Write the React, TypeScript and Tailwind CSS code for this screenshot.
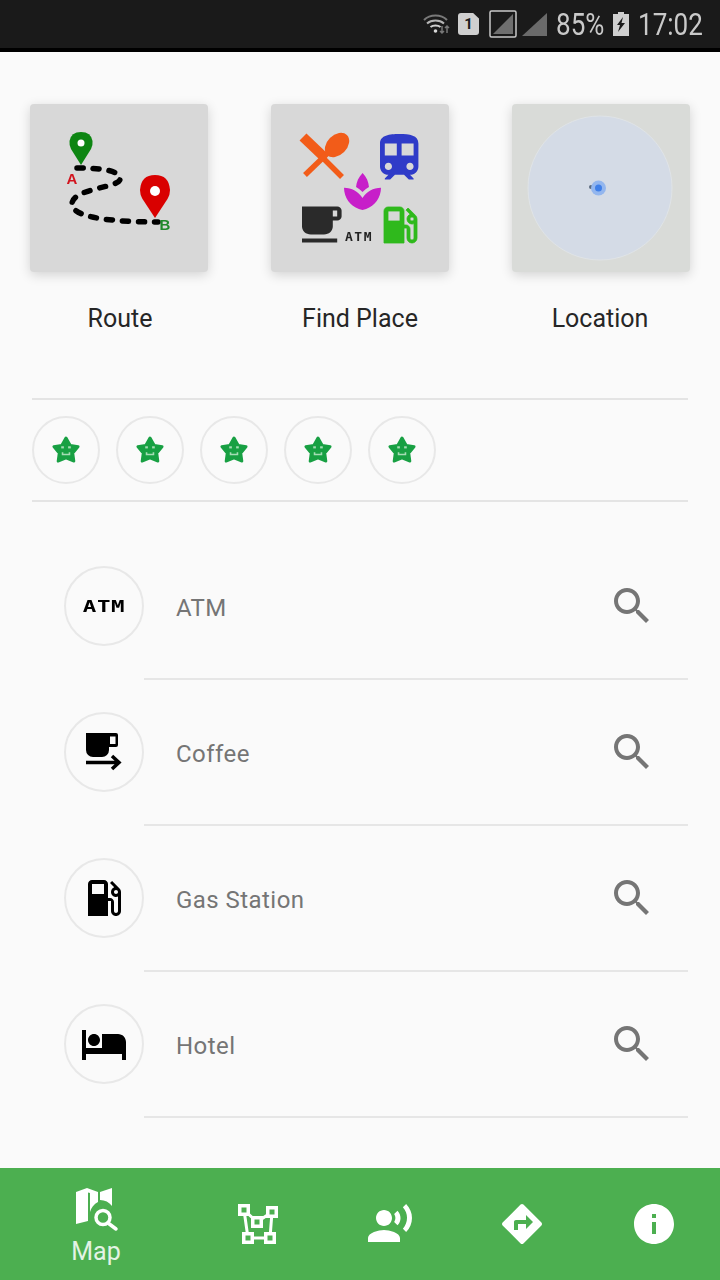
import type { ReactNode } from "react";

const font = "font-['Roboto',sans-serif]";

const paths = {
  search:
    "M15.5 14h-.79l-.28-.27C15.41 12.59 16 11.11 16 9.5 16 5.91 13.09 3 9.5 3S3 5.91 3 9.5 5.91 16 9.5 16c1.61 0 3.09-.59 4.23-1.57l.27.28v.79l5 4.99L20.49 19l-4.99-5zm-6 0C7.01 14 5 11.99 5 9.5S7.01 5 9.5 5 14 7.01 14 9.5 11.99 14 9.5 14z",
  hotel:
    "M7 13c1.66 0 3-1.34 3-3S8.66 7 7 7s-3 1.34-3 3 1.34 3 3 3zm12-6h-8v7H3V5H1v15h2v-3h18v3h2v-9c0-2.21-1.79-4-4-4z",
  gas: "M19.77 7.23l.01-.01-3.72-3.72L15 4.56l2.11 2.11c-.94.36-1.61 1.26-1.61 2.33 0 1.38 1.12 2.5 2.5 2.5.36 0 .69-.08 1-.21v7.21c0 .55-.45 1-1 1s-1-.45-1-1V14c0-1.1-.9-2-2-2h-1V5c0-1.1-.9-2-2-2H6c-1.1 0-2 .9-2 2v16h10v-7.5h1.5v5c0 1.38 1.12 2.5 2.5 2.5s2.5-1.12 2.5-2.5V9c0-.69-.28-1.32-.73-1.77zM12 10H6V5h6v5zm6 0c-.55 0-1-.45-1-1s.45-1 1-1 1 .45 1 1-.45 1-1 1z",
  cafe: "M20 3H4v10c0 2.21 1.79 4 4 4h6c2.21 0 4-1.79 4-4v-3h2c1.11 0 2-.89 2-2V5c0-1.11-.89-2-2-2zm0 5h-2V5h2v3zM4 19h16v2H4z",
  train:
    "M12 2c-4 0-8 .5-8 4v9.5C4 17.43 5.57 19 7.5 19L6 20.5v.5h2.23l2-2H14l2 2h2v-.5L16.5 19c1.93 0 3.5-1.57 3.5-3.5V6c0-3.5-3.58-4-8-4zM7.5 17c-.83 0-1.5-.67-1.5-1.5S6.67 14 7.5 14s1.5.67 1.5 1.5S8.33 17 7.5 17zm3.5-6H6V6h5v5zm2 0V6h5v5h-5zm3.5 6c-.83 0-1.5-.67-1.5-1.5s.67-1.5 1.5-1.5 1.5.67 1.5 1.5-.67 1.5-1.5 1.5z",
  spa: "M15.49 9.63c-.18-2.79-1.31-5.51-3.43-7.63-2.14 2.14-3.32 4.86-3.55 7.63 1.28.68 2.46 1.56 3.49 2.63 1.03-1.06 2.21-1.94 3.49-2.63zM12 15.45C9.85 12.17 6.18 10 2 10c0 5.32 3.36 9.82 8.03 11.49.63.23 1.29.4 1.97.51.68-.12 1.33-.29 1.97-.51C18.64 19.82 22 15.32 22 10c-4.18 0-7.85 2.17-10 5.45z",
  voice:
    "M9 13c2.21 0 4-1.79 4-4s-1.79-4-4-4-4 1.79-4 4 1.79 4 4 4zm0 2c-2.67 0-8 1.34-8 4v2h16v-2c0-2.66-5.33-4-8-4zm6.76-9.64l-1.68 1.69c.84 1.18.84 2.71 0 3.89l1.68 1.69c2.02-2.02 2.02-5.07 0-7.27zM20.07 2l-1.63 1.63c2.77 3.02 2.77 7.56 0 10.74L20.07 16c3.9-3.89 3.91-9.95 0-14z",
  directions:
    "M21.71 11.29l-9-9c-.39-.39-1.02-.39-1.41 0l-9 9c-.39.39-.39 1.02 0 1.41l9 9c.39.39 1.02.39 1.41 0l9-9c.39-.38.39-1.01 0-1.41zM14 14.5V12h-4v3H8v-4c0-.55.45-1 1-1h5V7.5l3.5 3.5-3.5 3.5z",
  info: "M12 2C6.48 2 2 6.48 2 12s4.48 10 10 10 10-4.48 10-10S17.52 2 12 2zm1 15h-2v-6h2v6zm0-8h-2V7h2v2z",
};

function Md({ d, className }: { d: string; className?: string }) {
  return (
    <svg viewBox="0 0 24 24" fill="currentColor" className={className}>
      <path d={d} />
    </svg>
  );
}

function StatusBar() {
  return (
    <div className={`h-[52px] shrink-0 bg-[#1a1a1a] border-b-4 border-black flex items-center text-[#c9c9c9] ${font}`}>
      <div className="ml-[422px] flex items-center">
        <svg width="28" height="22" viewBox="0 0 28 22" fill="none" stroke="#9a9a9a" strokeWidth="2">
          <path d="M2 7c6-6 17-6 23 0" opacity="0.75" />
          <path d="M5 10.5c4.500-4 12.500-4 17 0" stroke="#b5b5b5" />
          <path d="M8.500 14c2.500-2 7.500-2 10 0" stroke="#cfcfcf" />
          <circle cx="13.500" cy="18" r="1.800" fill="#d8d8d8" stroke="none" />
          <path d="M20 13v7M18 18l2 2 2-2M25 20v-7M23 15l2-2 2 2" stroke="#777" strokeWidth="1.500" />
        </svg>
        <div className="ml-[8px] w-[21px] h-[22px] bg-[#cfcfcf] rounded-[3px] [clip-path:polygon(0_0,72%_0,100%_25%,100%_100%,0_100%)] flex items-center justify-center text-[#1a1a1a] text-[15px] font-bold leading-none">
          1
        </div>
        <svg width="28" height="28" viewBox="0 0 28 28" className="ml-[10px]">
          <rect x="1" y="1" width="26" height="26" rx="1.500" fill="none" stroke="#c9c9c9" strokeWidth="1.500" />
          <path d="M4 24L24 4v20z" fill="#6f6f6f" />
        </svg>
        <svg width="25" height="23" viewBox="0 0 25 23" className="ml-[5px]">
          <path d="M0 23L25 0v23z" fill="#6a6a6a" />
        </svg>
        <span className="ml-[9px] w-[47px] text-[31px] leading-none whitespace-nowrap origin-left scale-x-[0.84]">85%</span>
        <svg width="16" height="24" viewBox="0 0 16 24" className="ml-[10px]">
          <path d="M5 0h6v2h5v22H0V2h5z" fill="#cfcfcf" />
          <path d="M10 5L4 13h3l-2 7 7-9H8.500z" fill="#1a1a1a" />
        </svg>
        <span className="ml-[9px] w-[65px] text-[31px] leading-none whitespace-nowrap origin-left scale-x-[0.84]">17:02</span>
      </div>
    </div>
  );
}

function RouteArt() {
  return (
    <svg viewBox="0 0 178 168" className="w-full h-full blur-[0.5px]">
      <path
        d="M47 64C70 64 90 66 90 75C90 84 42 84 42 100C42 115 90 118 128 118"
        fill="none"
        stroke="#000"
        strokeWidth="5.500"
        strokeLinecap="round"
        strokeDasharray="6 10"
      />
      <path d="M51 61L41 45Q39 41 39.500 37Q41 28 51 28Q61 28 62.500 37Q63 41 61 45z" fill="#0d8512" />
      <circle cx="51" cy="39" r="3.500" fill="#fff" />
      <path d="M125 114L112.500 95Q110 91 110 86Q111 71 125 71Q139 71 140 86Q140 91 137.500 95z" fill="#d90000" />
      <circle cx="125" cy="87" r="5" fill="#fff" />
      <text x="42" y="80" textAnchor="middle" fontFamily="Liberation Sans" fontWeight="700" fontSize="15" fill="#d2141e">
        A
      </text>
      <text x="135" y="126" textAnchor="middle" fontFamily="Liberation Sans" fontWeight="700" fontSize="15" fill="#1f8a2a">
        B
      </text>
    </svg>
  );
}

function PlaceArt() {
  return (
    <svg viewBox="0 0 178 168" className="w-full h-full blur-[0.4px]">
      <path d="M32 34L71 73" stroke="#f25c19" strokeWidth="5.500" />
      <path d="M32 33L53 53" stroke="#f25c19" strokeWidth="10" />
      <path d="M34 71L62 44" stroke="#f25c19" strokeWidth="5.500" />
      <ellipse cx="66" cy="41" rx="10" ry="14" transform="rotate(45 66 41)" fill="#f25c19" />
      <path d={paths.train} transform="translate(99.400 25.200) scale(2.400)" fill="#2f3bc8" />
      <path d={paths.spa} transform="translate(69.300 65.300) scale(1.850)" fill="#c71fc9" />
      <path d={paths.cafe} transform="translate(22.200 96.600) scale(2.200 2)" fill="#2a2a2a" />
      <text x="88" y="137" textAnchor="middle" fontFamily="DejaVu Sans Mono" fontWeight="700" fontSize="13" fill="#222" letterSpacing="1.500">
        ATM
      </text>
      <path d={paths.gas} transform="translate(105 97) scale(2)" fill="#2fb91c" stroke="#2fb91c" strokeWidth="0.400" />
    </svg>
  );
}

function LocationArt() {
  return (
    <svg viewBox="0 0 178 168" className="w-full h-full blur-[0.4px]">
      <circle cx="88" cy="84" r="72" fill="#d4dbe6" stroke="#dfe3e6" strokeWidth="1" />
      <circle cx="79" cy="83" r="2" fill="#5b6b80" />
      <circle cx="86.500" cy="84" r="7.500" fill="#93b6ee" />
      <circle cx="86.500" cy="84" r="3.500" fill="#3f7fe8" />
    </svg>
  );
}

function Shortcut({ label, card, children }: { label: string; card: string; children: ReactNode }) {
  return (
    <div className="flex flex-col items-center">
      <div className={`w-[178px] h-[168px] rounded-[4px] overflow-hidden shadow-[0_3px_12px_rgba(0,0,0,0.16)] ${card}`}>{children}</div>
      <div className="mt-[31px] text-[25px] leading-[32px] text-[#262626]">{label}</div>
    </div>
  );
}

function StarFace() {
  return (
    <svg viewBox="0 0 32 32" className="w-[34px] h-[34px]">
      <path
        d="M16 4.500L20 11.500L27.500 12.800L22.500 19L23.500 26.500L16 23.500L8.500 26.500L9.500 19L4.500 12.800L12 11.500z"
        fill="#18a043"
        stroke="#18a043"
        strokeWidth="2.500"
        strokeLinejoin="round"
      />
      <rect x="11.500" y="12.500" width="2.500" height="2" fill="#a5dcb4" />
      <rect x="18" y="12.500" width="2.500" height="2" fill="#a5dcb4" />
      <path d="M12 18h1.500v1.500h5V18H20v3h-8z" fill="#a5dcb4" />
    </svg>
  );
}

const places = [
  {
    name: "ATM",
    icon: (
      <span className="font-['DejaVu_Sans_Mono',monospace] font-bold text-[18px] leading-none tracking-[0.5px] text-black scale-x-[1.25] scale-y-[0.92]">
        ATM
      </span>
    ),
  },
  {
    name: "Coffee",
    icon: (
      <svg viewBox="0 0 38 40" className="w-[38px] h-[40px]">
        <path d="M1 1h30a2 2 0 0 1 2 2v10a2 2 0 0 1-2 2h-7v3a7 7 0 0 1-7 7H8a7 7 0 0 1-7-7z" fill="#000" />
        <rect x="25" y="4.500" width="5.500" height="7.500" fill="#fafafa" />
        <path d="M1 30.500h33M27 24l7 6.500-7 6.500" fill="none" stroke="#000" strokeWidth="3.500" />
      </svg>
    ),
  },
  { name: "Gas Station", icon: <Md d={paths.gas} className="w-[48px] h-[48px] text-black" /> },
  { name: "Hotel", icon: <Md d={paths.hotel} className="w-[48px] h-[48px] text-black" /> },
];

function PlaceRow({ name, icon }: { name: string; icon: ReactNode }) {
  return (
    <div className="relative h-[146px] pl-[64px] flex items-center after:absolute after:left-[144px] after:right-[32px] after:bottom-0 after:h-[2px] after:bg-[#e6e6e6] pb-[2px]">
      <div className="w-[80px] h-[80px] rounded-full border-2 border-[#e8e8e8] flex items-center justify-center">{icon}</div>
      <div className="ml-[32px] flex-1 text-[24px] leading-[32px] text-[#757575] tracking-[0.45px] mt-[3px]">{name}</div>
      <Md d={paths.search} className="w-[48px] h-[48px] text-[#757575] mr-[64px] ml-[16px]" />
    </div>
  );
}

function MapSearchIcon() {
  return (
    <svg viewBox="0 0 48 48" className="w-[48px] h-[48px]" fill="#fff">
      <path d="M4 8L15 4L26 8V18C22 20 19 24 18 28V9L16 8.500V37L4 40z" />
      <path d="M28 8L40 4V22C37 18 33 16 28 16z" />
      <circle cx="31" cy="33.500" r="7" fill="none" stroke="#fff" strokeWidth="3.500" />
      <path d="M36 39L44 45" stroke="#fff" strokeWidth="3.500" strokeLinecap="round" />
    </svg>
  );
}

function PolylineIcon() {
  const nodes = [
    [244, 1210],
    [272, 1212],
    [257, 1222],
    [248, 1238],
    [270, 1238],
  ];
  return (
    <svg viewBox="234 1200 48 48" className="w-[48px] h-[48px]">
      <path d="M244 1210L248 1238H270L272 1212L257 1222L244 1210" fill="none" stroke="#fff" strokeWidth="3" />
      {nodes.map(([x, y]) => (
        <g key={`${x}-${y}`}>
          <rect x={x - 6} y={y - 6} width="12" height="12" fill="#fff" />
          <rect x={x - 2.500} y={y - 2.500} width="5" height="5" fill="#4caf50" />
        </g>
      ))}
    </svg>
  );
}

function BottomNav() {
  const item = "w-[132px] flex items-center justify-center";
  return (
    <div className="h-[112px] shrink-0 bg-[#4caf50] flex text-white">
      <div className="w-[192px] flex flex-col items-center pt-[16px]">
        <MapSearchIcon />
        <span className="mt-[4px] text-[25px] leading-[32px] text-[#e3f3e4]">Map</span>
      </div>
      <div className={item}>
        <PolylineIcon />
      </div>
      <div className={item}>
        <Md d={paths.voice} className="w-[48px] h-[48px]" />
      </div>
      <div className={item}>
        <Md d={paths.directions} className="w-[48px] h-[48px]" />
      </div>
      <div className={item}>
        <Md d={paths.info} className="w-[48px] h-[48px]" />
      </div>
    </div>
  );
}

export default function App() {
  return (
    <div className={`w-[720px] h-[1280px] flex flex-col bg-[#fafafa] overflow-hidden ${font}`}>
      <StatusBar />
      <div className="flex-1 min-h-0">
        <div className="grid grid-cols-3 pt-[52px]">
          <Shortcut label="Route" card="bg-[#d8d8d8] mr-[2px]">
            <RouteArt />
          </Shortcut>
          <Shortcut label="Find Place" card="bg-[#d8d8d8]">
            <PlaceArt />
          </Shortcut>
          <Shortcut label="Location" card="bg-[#d9dbd8] ml-[2px]">
            <LocationArt />
          </Shortcut>
        </div>
        <div className="mx-[32px] mt-[63px] h-[104px] border-y-2 border-[#e4e4e4] flex items-center gap-[16px]">
          {[0, 1, 2, 3, 4].map((i) => (
            <div key={i} className="w-[68px] h-[68px] rounded-full border-2 border-[#e8e8e8] flex items-center justify-center">
              <StarFace />
            </div>
          ))}
        </div>
        <div className="mt-[32px]">
          {places.map((p) => (
            <PlaceRow key={p.name} name={p.name} icon={p.icon} />
          ))}
        </div>
      </div>
      <BottomNav />
    </div>
  );
}
